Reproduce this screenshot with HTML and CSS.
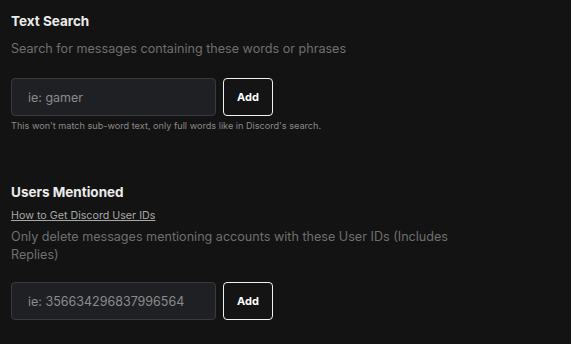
FILE: index.html
```html
<!DOCTYPE html>
<html lang="en">
<head>
    <meta charset="UTF-8">
    <title>Filters</title>
    <link rel="stylesheet" href="styles.css">
</head>
<body>
    <div class="panel">
        <section class="field">
            <h3 class="field-title">Text Search</h3>
            <p class="field-desc">Search for messages containing these words or phrases</p>
            <div class="input-row">
                <input type="text" class="text-input" placeholder="ie: gamer">
                <button class="add-btn">Add</button>
            </div>
            <p class="field-note">This won't match sub-word text, only full words like in Discord's search.</p>
        </section>

        <section class="field field-users">
            <h3 class="field-title">Users Mentioned</h3>
            <a href="#" class="help-link">How to Get Discord User IDs</a>
            <p class="field-desc">Only delete messages mentioning accounts with these User IDs (Includes Replies)</p>
            <div class="input-row">
                <input type="text" class="text-input" placeholder="ie: 356634296837996564">
                <button class="add-btn">Add</button>
            </div>
        </section>
    </div>
</body>
</html>
```

FILE: styles.css
```css
body {
    margin: 0;
    background: #131313;
    font-family: Inter, "Noto Sans", sans-serif;
    color: #e6e6e6;
}
.panel {
    padding: 13px 11px;
    width: 470px;
}
.field-title {
    margin: 0;
    font-size: 13.5px;
    font-weight: 700;
    line-height: 17px;
    color: #ececec;
}
.field-desc {
    margin: 10px 0 0;
    font-size: 12.6px;
    line-height: 18px;
    color: #6f6f6f;
}
.input-row {
    display: flex;
    gap: 7px;
    margin-top: 20px;
}
.text-input {
    width: 205px;
    height: 38px;
    box-sizing: border-box;
    padding: 0 16px;
    background: #1f2023;
    border: 1px solid #3a3b3e;
    border-radius: 4px;
    font-family: Inter, sans-serif;
    font-size: 12.5px;
    color: #ddd;
    outline: none;
}
.text-input::placeholder {
    color: #8a8b8d;
}
.add-btn {
    width: 50px;
    height: 38px;
    background: #141414;
    border: 1px solid #f2f2f2;
    border-radius: 4px;
    color: #fff;
    font-family: Inter, sans-serif;
    font-size: 11px;
    font-weight: 700;
    cursor: pointer;
}
.field-note {
    margin: 4px 0 0;
    font-size: 9.15px;
    line-height: 12px;
    color: #8a8a8a;
}
.field-users {
    margin-top: 52px;
}
.help-link {
    display: inline-block;
    margin-top: 8px;
    font-size: 10.7px;
    line-height: 13px;
    color: #a8a8a8;
    text-decoration: underline;
}
.field-users .field-desc {
    margin-top: 5px;
}
.field-users .input-row {
    margin-top: 18px;
}
```
